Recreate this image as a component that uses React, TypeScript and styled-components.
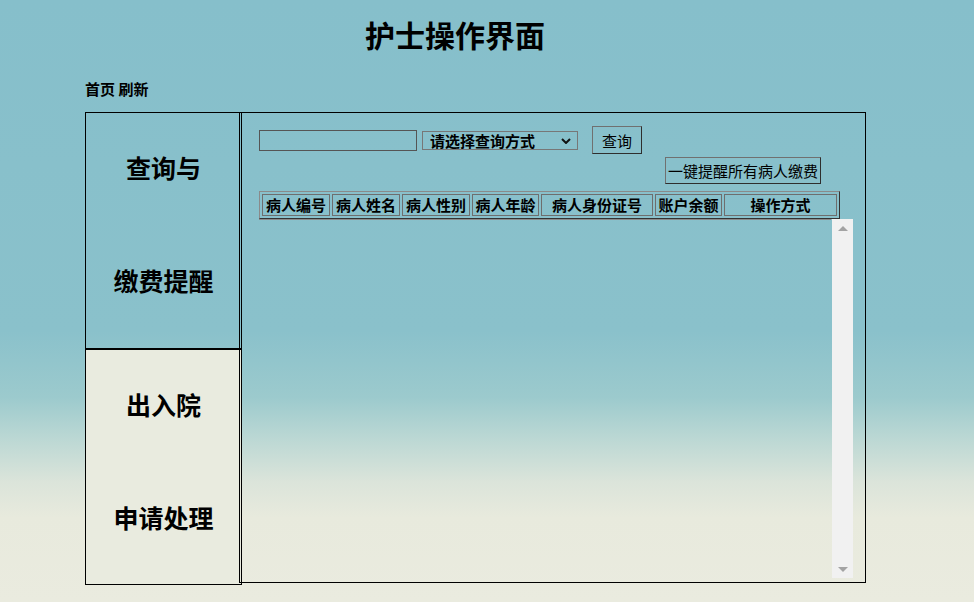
import styled, { createGlobalStyle } from "styled-components";

const GlobalStyle = createGlobalStyle`
  html, body {
    margin: 0;
    padding: 0;
  }
  body {
    font-family: "Noto Sans CJK SC", "Noto Sans", sans-serif;
    color: #000;
  }
`;

const columns = [
  { label: "病人编号", width: 68 },
  { label: "病人姓名", width: 68 },
  { label: "病人性别", width: 68 },
  { label: "病人年龄", width: 67 },
  { label: "病人身份证号", width: 112 },
  { label: "账户余额", width: 67 },
  { label: "操作方式", width: 113 },
];

export default function App() {
  return (
    <Page>
      <GlobalStyle />
      <Title>护士操作界面</Title>
      <TopLinks>
        <span>首页</span> <span>刷新</span>
      </TopLinks>
      <Main>
        <SideNav>
          <NavCell>
            <NavLine>查询与</NavLine>
            <NavLine>缴费提醒</NavLine>
          </NavCell>
          <NavCell $muted>
            <NavLine>出入院</NavLine>
            <NavLine>申请处理</NavLine>
          </NavCell>
        </SideNav>
        <Panel>
          <SearchRow>
            <SearchInput type="text" />
            <SelectWrap>
              <ModeSelect defaultValue="">
                <option value="">请选择查询方式</option>
                <option value="id">病人编号</option>
                <option value="name">病人姓名</option>
              </ModeSelect>
              <Chevron width="10" height="6" viewBox="0 0 10 6">
                <path d="M1 1 L5 5 L9 1" fill="none" stroke="#111" strokeWidth="2" />
              </Chevron>
            </SelectWrap>
            <Button $w={50} $h={28}>查询</Button>
          </SearchRow>
          <RemindRow>
            <Button $w={156} $h={27}>一键提醒所有病人缴费</Button>
          </RemindRow>
          <HeadTable>
            <thead>
              <tr>
                {columns.map((c) => (
                  <HeadCell key={c.label} $w={c.width}>
                    {c.label}
                  </HeadCell>
                ))}
              </tr>
            </thead>
          </HeadTable>
          <ScrollRow>
            <ListBody />
            <ScrollBar>
              <Arrow $dir="up" />
              <Arrow $dir="down" />
            </ScrollBar>
          </ScrollRow>
        </Panel>
      </Main>
    </Page>
  );
}

const Page = styled.div`
  width: 974px;
  min-height: 602px;
  box-sizing: border-box;
  background: linear-gradient(
    to bottom,
    #86bfcb 0%,
    #8ac1cb 55%,
    #9ccacd 66%,
    #bcd8d4 73%,
    #dbe4da 80%,
    #e8eadd 86%,
    #eaebdf 100%
  );
  overflow: hidden;
`;

const Title = styled.h1`
  margin: 0;
  width: 910px;
  padding-top: 16px;
  font-size: 30px;
  line-height: 36px;
  font-weight: 700;
  text-align: center;
`;

const TopLinks = styled.div`
  margin-top: 27px;
  padding-left: 85px;
  font-size: 15px;
  line-height: 20px;
  font-weight: 700;
`;

const Main = styled.div`
  display: flex;
  align-items: flex-start;
  margin-top: 13px;
  padding-left: 85px;
`;

const SideNav = styled.div`
  display: flex;
  flex-direction: column;
  width: 157px;
`;

const NavCell = styled.div<{ $muted?: boolean }>`
  box-sizing: border-box;
  height: 237px;
  border: 1px solid #000;
  background: ${(p) => (p.$muted ? "#e9ebdf" : "transparent")};
  display: flex;
  flex-direction: column;
  align-items: center;
  gap: 83px;
  padding-top: 39px;
  & + & {
    height: 236px;
  }
`;

const NavLine = styled.div`
  font-size: 25px;
  line-height: 30px;
  font-weight: 700;
`;

const Panel = styled.div`
  box-sizing: border-box;
  width: 627px;
  height: 471px;
  margin-left: -3px;
  border: 1px solid #000;
  padding: 13px 12px 4px 19px;
  display: flex;
  flex-direction: column;
`;

const SearchRow = styled.div`
  display: flex;
  align-items: center;
  height: 28px;
`;

const SearchInput = styled.input`
  box-sizing: border-box;
  width: 158px;
  height: 21px;
  margin: 0 5px 0 0;
  border: 1px solid #555;
  background: transparent;
  outline: none;
`;

const SelectWrap = styled.div`
  position: relative;
  margin-right: 14px;
`;

const ModeSelect = styled.select`
  box-sizing: border-box;
  width: 156px;
  height: 19px;
  margin: 0;
  padding: 0 0 0 7px;
  border: 1px solid #777;
  background: transparent;
  appearance: none;
  font-family: "Noto Sans CJK SC", sans-serif;
  font-size: 15px;
  font-weight: 700;
  line-height: 17px;
  color: #000;
  display: block;
`;

const Chevron = styled.svg`
  position: absolute;
  right: 7px;
  top: 7px;
  pointer-events: none;
`;

const Button = styled.button<{ $w: number; $h: number }>`
  box-sizing: border-box;
  width: ${(p) => p.$w}px;
  height: ${(p) => p.$h}px;
  padding: 0;
  margin: 0;
  border: 1px solid;
  border-color: #707070 #2e2e2e #2e2e2e #707070;
  background: transparent;
  font-family: "Noto Sans CJK SC", sans-serif;
  font-size: 15px;
  color: #000;
  white-space: nowrap;
`;

const RemindRow = styled.div`
  display: flex;
  justify-content: flex-end;
  margin-top: 3px;
  padding-right: 32px;
`;

const HeadTable = styled.table`
  box-sizing: border-box;
  width: 581px;
  margin-top: 7px;
  table-layout: fixed;
  border-collapse: separate;
  border-spacing: 2px;
  border: 1px solid;
  border-color: #8a8a8a #333 #333 #8a8a8a;
`;

const HeadCell = styled.th<{ $w: number }>`
  box-sizing: border-box;
  width: ${(p) => p.$w}px;
  height: 22px;
  padding: 0;
  border: 1px solid #6e6e6e;
  font-size: 15px;
  line-height: 20px;
  font-weight: 700;
  text-align: center;
  white-space: nowrap;
  overflow: hidden;
`;

const ScrollRow = styled.div`
  display: flex;
  height: 359px;
`;

const ListBody = styled.div`
  width: 572px;
  border-top: 1px solid #8a8a8a;
  margin-right: 1px;
  align-self: flex-start;
`;

const ScrollBar = styled.div`
  width: 21px;
  height: 100%;
  background: #f1f1f1;
  display: flex;
  flex-direction: column;
  justify-content: space-between;
  align-items: center;
  padding: 7px 0 6px;
  box-sizing: border-box;
`;

const Arrow = styled.div<{ $dir: "up" | "down" }>`
  width: 0;
  height: 0;
  border-left: 5px solid transparent;
  border-right: 5px solid transparent;
  ${(p) =>
    p.$dir === "up"
      ? "border-bottom: 5px solid #a3a3a3;"
      : "border-top: 5px solid #a3a3a3;"}
`;
